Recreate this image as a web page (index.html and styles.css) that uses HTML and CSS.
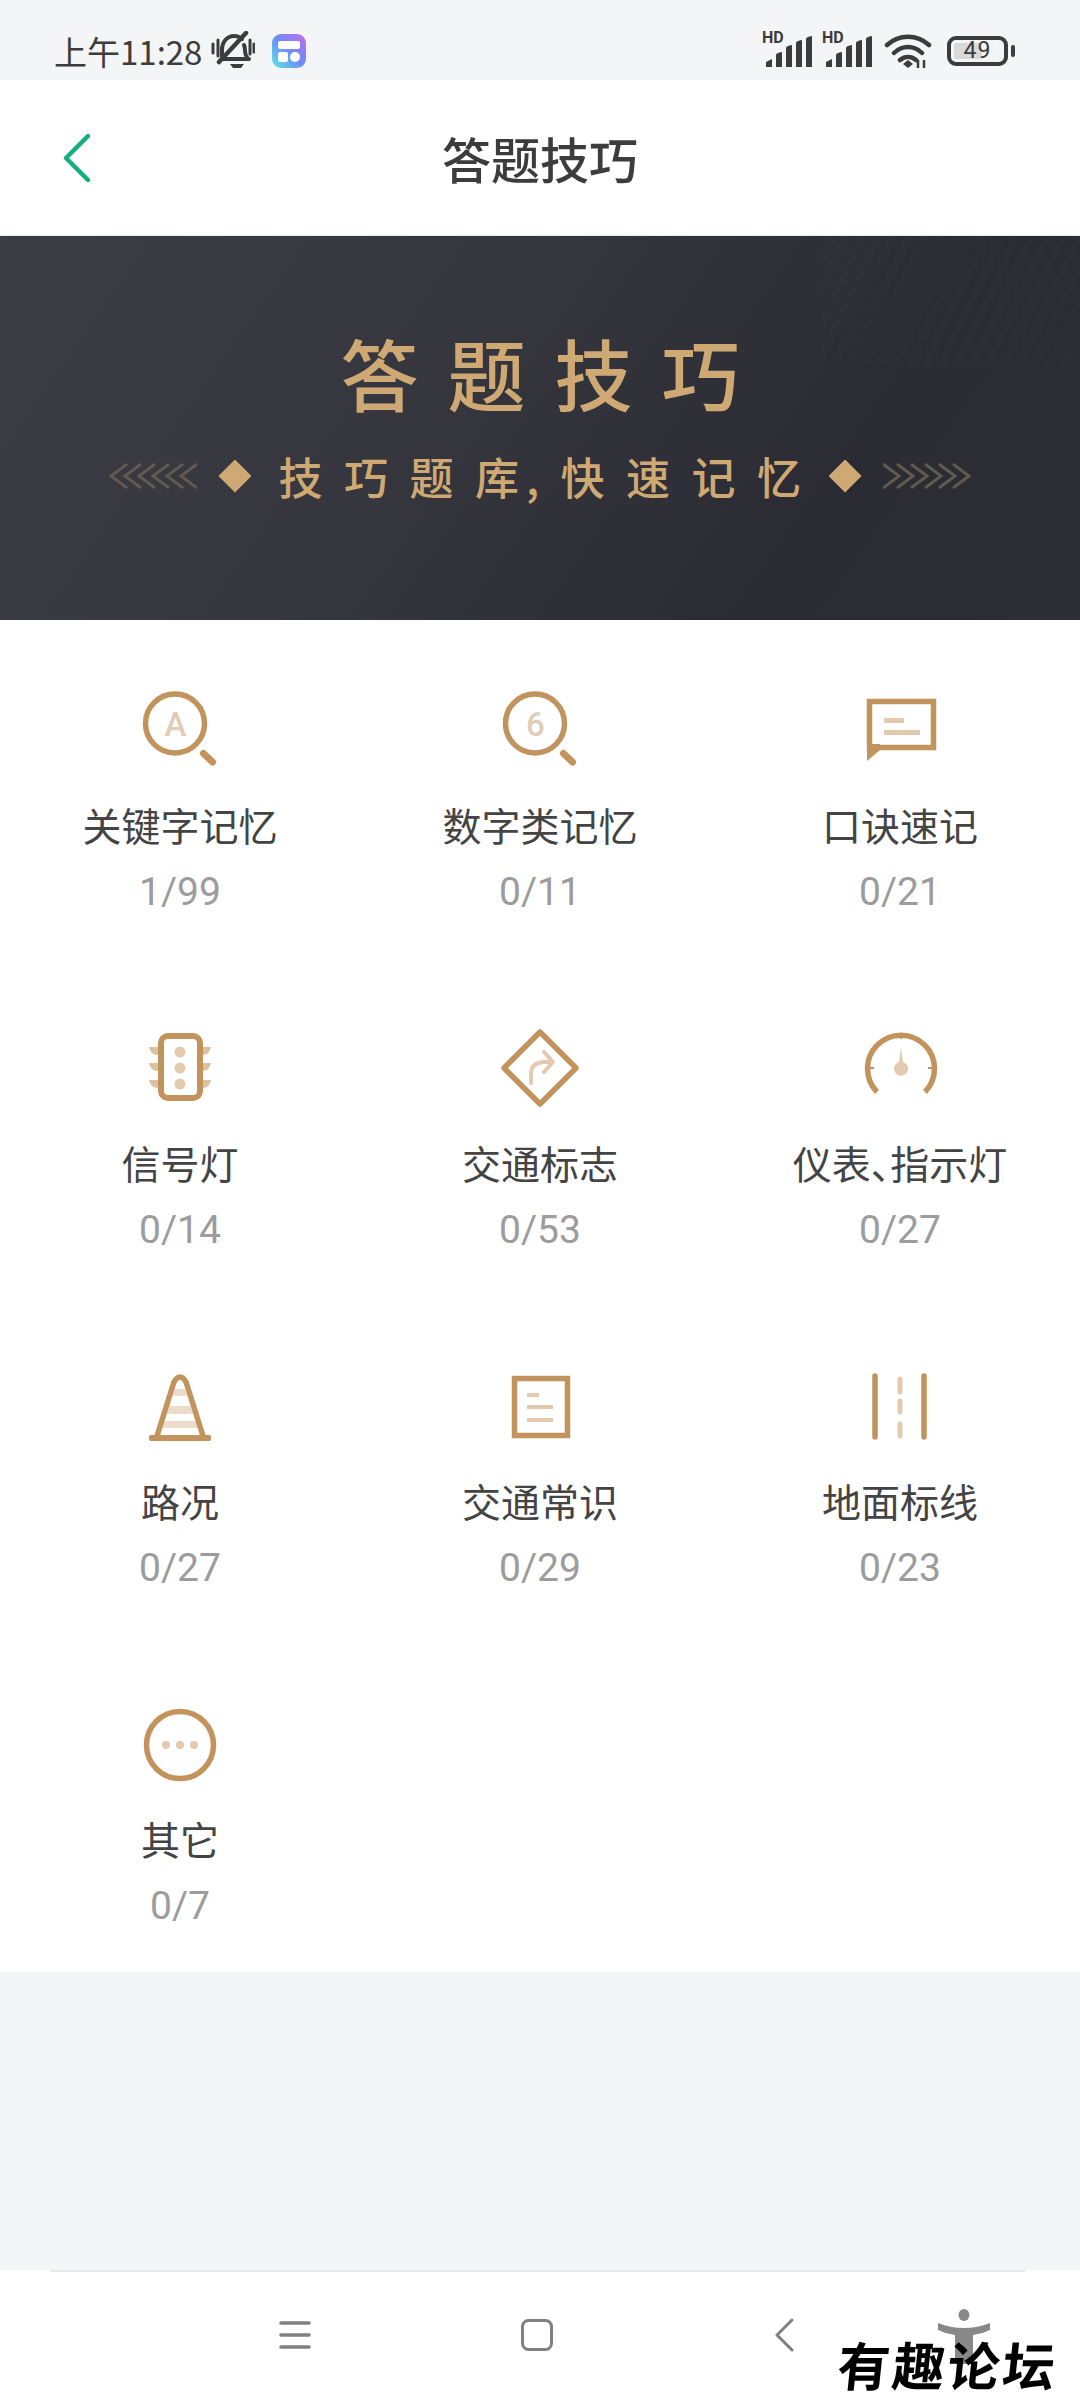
FILE: index.html
```html
<!DOCTYPE html>
<html lang="zh-CN">
<head>
    <meta charset="UTF-8">
    <title>答题技巧</title>
    <link rel="stylesheet" href="styles.css">
</head>
<body>

    <!-- status bar -->
    <div class="status-bar">
        <div class="status-left">
            <span class="time">上午11:28</span>
            <svg class="bell" width="44" height="40" viewBox="0 0 44 40">
                <path d="M11 27V19C11 11 16 5 23 5c3 0 6 1 8 3M33 14c1 2 1 4 1 6 0 4 2 6 3 8M11 28H38" fill="none" stroke="#3c3c3c" stroke-width="4" stroke-linecap="round" stroke-linejoin="round"/>
                <path d="M35 2L8 31" stroke="#3c3c3c" stroke-width="4.500" stroke-linecap="round"/>
                <path d="M19 33h14l-3 4h-8z" fill="#3c3c3c"/>
                <path d="M2 13v9M7 9v16M39 9v14M43 13v8" stroke="#3c3c3c" stroke-width="3" stroke-linecap="round"/>
            </svg>
            <svg class="app-icon" width="34" height="34" viewBox="0 0 34 34">
                <defs>
                    <linearGradient id="appGrad" x1="0" y1="1" x2="1" y2="0">
                        <stop offset="0" stop-color="#5fe6e0"/>
                        <stop offset="0.500" stop-color="#6d8cf7"/>
                        <stop offset="1" stop-color="#c26cf5"/>
                    </linearGradient>
                </defs>
                <rect width="34" height="34" rx="9" fill="url(#appGrad)"/>
                <rect x="6" y="7" width="22" height="8" rx="2" fill="#fff"/>
                <rect x="6" y="18" width="10" height="10" rx="2" fill="#fff"/>
                <circle cx="23" cy="23" r="5" fill="#fff"/>
            </svg>
        </div>
        <div class="status-right">
            <div class="signal">
                <span class="hd">HD</span>
                <svg width="50" height="32" viewBox="0 0 50 32">
                    <path d="M2 31v-5l6-3v8zM12 31V19q0-2 6-3v15zM22 31V12q0-2 6-3v22zM32 31V7q0-2 6-3v27zM42 31V3q0-2 6-3v31z" fill="#3c3c3c"/>
                </svg>
            </div>
            <div class="signal">
                <span class="hd">HD</span>
                <svg width="50" height="32" viewBox="0 0 50 32">
                    <path d="M2 31v-5l6-3v8zM12 31V19q0-2 6-3v15zM22 31V12q0-2 6-3v22zM32 31V7q0-2 6-3v27zM42 31V3q0-2 6-3v31z" fill="#3c3c3c"/>
                </svg>
            </div>
            <svg class="wifi" width="48" height="36" viewBox="0 0 48 36">
                <path d="M3 12C15 1 33 1 45 12M10 20C18 12 30 12 38 20M16 27c5-4 11-4 16 0" fill="none" stroke="#3c3c3c" stroke-width="4.500" stroke-linecap="round"/>
                <path d="M19 31l5-4 5 4-5 4z" fill="#3c3c3c"/>
                <path d="M34 27v8M40 27v8" stroke="#3c3c3c" stroke-width="2.500"/>
            </svg>
            <div class="battery">
                <div class="battery-fill"></div>
                <span class="battery-num">49</span>
                <div class="battery-tip"></div>
            </div>
        </div>
    </div>

    <!-- header -->
    <header class="top-bar">
        <svg class="back" width="28" height="48" viewBox="0 0 28 48">
            <path d="M25 2L3 24l22 22" fill="none" stroke="#12b07a" stroke-width="4.500" stroke-linecap="round" stroke-linejoin="round"/>
        </svg>
        <h1 class="page-title">答题技巧</h1>
    </header>

    <!-- banner -->
    <section class="banner">
        <div class="banner-title">答题技巧</div>
        <div class="banner-sub">
            <svg width="88" height="26" viewBox="0 0 88 26" class="chevrons">
                <path d="M18 1L2 13l16 12M32 1L16 13l16 12M46 1L30 13l16 12M60 1L44 13l16 12M74 1L58 13l16 12M88 1L72 13l16 12" fill="none" stroke="#62594f" stroke-width="3"/>
            </svg>
            <span class="diamond"></span>
            <span class="banner-sub-text">技巧题<span class="tight">库</span>,快速记忆</span>
            <span class="diamond"></span>
            <svg width="88" height="26" viewBox="0 0 88 26" class="chevrons">
                <path d="M0 1l16 12L0 25M14 1l16 12-16 12M28 1l16 12-16 12M42 1l16 12-16 12M56 1l16 12-16 12M70 1l16 12-16 12" fill="none" stroke="#62594f" stroke-width="3"/>
            </svg>
        </div>
    </section>

    <!-- categories -->
    <main class="grid">
        <div class="cell">
            <svg class="icon" viewBox="0 0 90 90">
                <circle class="line" cx="40" cy="41.500" r="29.500"/>
                <text class="icon-letter" x="40.500" y="54">A</text>
                <path class="line thick" d="M68.500 71.500l9 8.500"/>
            </svg>
            <div class="label">关键字记忆</div>
            <div class="count">1/99</div>
        </div>
        <div class="cell">
            <svg class="icon" viewBox="0 0 90 90">
                <circle class="line" cx="40" cy="41.500" r="29.500"/>
                <text class="icon-letter" x="40.500" y="54">6</text>
                <path class="line thick" d="M68.500 71.500l9 8.500"/>
            </svg>
            <div class="label">数字类记忆</div>
            <div class="count">0/11</div>
        </div>
        <div class="cell">
            <svg class="icon" viewBox="0 0 90 90">
                <path class="line square" d="M14.500 19.500H78.500V65.500H14.500z"/>
                <path class="fill" d="M12 62h13v6L12 79z"/>
                <path class="soft" d="M29 36h20v5H29zM29 48h36v5H29z"/>
            </svg>
            <div class="label">口诀速记</div>
            <div class="count">0/21</div>
        </div>

        <div class="cell">
            <svg class="icon" viewBox="0 0 90 90">
                <path class="wing" d="M14 27h9v8c-5 0-8-3-9-8zM14 43h9v8c-5 0-8-3-9-8zM14 60h9v8c-5 0-8-3-9-8zM76 27h-9v8c5 0 8-3 9-8zM76 43h-9v8c5 0 8-3 9-8zM76 60h-9v8c5 0 8-3 9-8z"/>
                <rect class="line bold" x="26" y="16" width="39" height="62" rx="7"/>
                <circle class="soft" cx="45" cy="32" r="5.500"/>
                <circle class="soft" cx="45" cy="48" r="5.500"/>
                <circle class="soft" cx="45" cy="64" r="5.500"/>
            </svg>
            <div class="label">信号灯</div>
            <div class="count">0/14</div>
        </div>
        <div class="cell">
            <svg class="icon" viewBox="0 0 90 90">
                <path class="line round-join" d="M45 12L81 48 45 84 9 48z"/>
                <path class="soft-line" d="M36 63V54Q36 42 50 42H57M49 32l9 10-9 10"/>
            </svg>
            <div class="label">交通标志</div>
            <div class="count">0/53</div>
        </div>
        <div class="cell">
            <svg class="icon" viewBox="0 0 90 90">
                <path class="line" d="M22 72A33.500 33.500 0 1 1 70 72"/>
                <path class="fill" d="M45 14h2v5h-2zM14 47h5v2h-5zM73 47h5v2h-5z"/>
                <path class="soft" d="M46 27l2 15a7 7 0 1 1-4 0z"/>
            </svg>
            <div class="label">仪表、指示灯</div>
            <div class="count">0/27</div>
        </div>

        <div class="cell">
            <svg class="icon" viewBox="0 0 90 90">
                <path class="pale" d="M40 31h10l2 7H38zM34 48h22l2 8H32zM29 63h32l2 7H27z"/>
                <path class="line round-join" d="M22 78L39 24Q45 14 51 24L68 78"/>
                <rect class="fill" x="14" y="77" width="62" height="6" rx="2"/>
            </svg>
            <div class="label">路况</div>
            <div class="count">0/27</div>
        </div>
        <div class="cell">
            <svg class="icon" viewBox="0 0 90 90">
                <rect class="line" x="19.500" y="20.500" width="53" height="57"/>
                <path class="soft" d="M32 35h12v4H32zM32 47h26v4H32zM32 60h26v4H32z"/>
            </svg>
            <div class="label">交通常识</div>
            <div class="count">0/29</div>
        </div>
        <div class="cell">
            <svg class="icon" viewBox="0 0 90 90">
                <path class="line" stroke-linecap="round" d="M20 18V79M69 18V79"/>
                <path class="soft-line wide" d="M45 21V34M45 43V54M45 66V78"/>
            </svg>
            <div class="label">地面标线</div>
            <div class="count">0/23</div>
        </div>

        <div class="cell">
            <svg class="icon" viewBox="0 0 90 90">
                <circle class="line" cx="45" cy="49" r="33.500"/>
                <circle class="soft" cx="31" cy="49" r="4"/>
                <circle class="soft" cx="45" cy="49" r="4"/>
                <circle class="soft" cx="59" cy="49" r="4"/>
            </svg>
            <div class="label">其它</div>
            <div class="count">0/7</div>
        </div>
    </main>

    <div class="spacer"></div>

    <!-- bottom navigation -->
    <nav class="nav-bar">
        <svg width="32" height="30" viewBox="0 0 32 30">
            <path d="M2 3h28M2 15h28M2 27h28" stroke="#808080" stroke-width="3.500" stroke-linecap="round"/>
        </svg>
        <svg class="nav-home" width="32" height="32" viewBox="0 0 32 32">
            <rect x="1.500" y="1.500" width="29" height="29" rx="6" fill="none" stroke="#808080" stroke-width="3"/>
        </svg>
        <svg class="nav-back" width="20" height="34" viewBox="0 0 20 34">
            <path d="M18 2L3 17l15 15" fill="none" stroke="#808080" stroke-width="3" stroke-linecap="round" stroke-linejoin="round"/>
        </svg>
    </nav>

    <!-- forum watermark, sits over the nav bar -->
    <svg class="mark-figure" width="54" height="56" viewBox="0 0 54 56">
        <ellipse cx="27" cy="7" rx="5.500" ry="6" fill="#888"/>
        <path d="M1 15q12 5 26 5t26-5v7q-8 4-17 5v29H18V27q-9-1-17-5z" fill="#888"/>
    </svg>
    <div class="mark-text">有趣论坛</div>

</body>
</html>
```

FILE: styles.css
```css
* {
    box-sizing: border-box;
}

body {
    margin: 0;
    width: 1080px;
    height: 2400px;
    display: flex;
    flex-direction: column;
    position: relative;
    overflow: hidden;
    background-color: #f4f5f7;
    font-family: "Noto Sans CJK SC", "Noto Sans", sans-serif;
}

/* status bar */
.status-bar {
    height: 80px;
    display: flex;
    justify-content: space-between;
    align-items: center;
    padding: 22px 72px 0 54px;
}

.status-left,
.status-right {
    display: flex;
    align-items: center;
}

.time {
    font-size: 33px;
    color: #3c3c3c;
    line-height: 40px;
}

.bell {
    margin-left: 9px;
}

.app-icon {
    margin-left: 17px;
}

.signal {
    position: relative;
    width: 50px;
    height: 34px;
    margin-right: 10px;
    display: flex;
    align-items: flex-end;
}

.hd {
    position: absolute;
    left: -2px;
    top: -4px;
    font-family: Roboto, sans-serif;
    font-size: 16px;
    font-weight: 700;
    line-height: 16px;
    color: #3c3c3c;
}

.wifi {
    margin: 0 15px 0 0;
}

.battery {
    position: relative;
    width: 61px;
    height: 30px;
    border: 4px solid #3c3c3c;
    border-radius: 9px;
    display: flex;
    align-items: center;
    justify-content: center;
}

.battery-fill {
    position: absolute;
    left: 3px;
    top: 3px;
    bottom: 3px;
    width: 28px;
    background-color: #d9d9d9;
    border-radius: 2px;
}

.battery-num {
    position: relative;
    font-family: Roboto, sans-serif;
    font-size: 23px;
    line-height: 22px;
    letter-spacing: 1px;
    color: #3c3c3c;
}

.battery-tip {
    position: absolute;
    right: -11px;
    top: 5px;
    width: 4px;
    height: 12px;
    border-radius: 2px;
    background-color: #3c3c3c;
}

/* header */
.top-bar {
    height: 156px;
    background-color: #fff;
    border-bottom: 1px solid #ececec;
    display: flex;
    align-items: center;
    justify-content: center;
    position: relative;
}

.back {
    position: absolute;
    left: 63px;
    top: 54px;
}

.page-title {
    margin: 0;
    font-size: 49px;
    font-weight: 500;
    color: #3c3c3c;
}

/* banner */
.banner {
    height: 384px;
    background:
        repeating-linear-gradient(115deg, transparent 0 7px, rgba(255, 255, 255, 0.007) 7px 14px) right top / 260px 130px no-repeat,
        linear-gradient(125deg, #3c3c44 0%, #36363e 40%, #2b2b34 75%, #2d2d35 100%);
    display: flex;
    flex-direction: column;
    align-items: center;
}

.banner-title {
    margin-top: 86px;
    font-size: 78px;
    line-height: 100px;
    letter-spacing: 29px;
    margin-right: -29px;
    font-weight: 500;
    color: #cfa973;
}

.banner-sub {
    margin-top: 24px;
    display: flex;
    align-items: center;
}

.banner-sub-text {
    margin: 0 -15px 0 6px;
    font-size: 44px;
    line-height: 60px;
    letter-spacing: 21.500px;
    font-weight: 500;
    color: #cfa973;
}

.tight {
    letter-spacing: 7px;
}

.diamond {
    width: 33px;
    height: 33px;
    margin: 0 21px;
    background-color: #cfa973;
    clip-path: polygon(50% 0, 100% 50%, 50% 100%, 0 50%);
}

/* categories */
.grid {
    display: grid;
    grid-template-columns: repeat(3, 360px);
    grid-auto-rows: 338px;
    background-color: #fff;
}

.cell {
    display: flex;
    flex-direction: column;
    align-items: center;
    padding-top: 62px;
}

.icon {
    width: 90px;
    height: 90px;
}

.line {
    fill: none;
    stroke: #c2935c;
    stroke-width: 5.5;
}

.line.bold {
    stroke-width: 6;
}

.line.thick {
    stroke-width: 7;
    stroke-linecap: round;
}

.line.square {
    stroke-linejoin: miter;
}

.round-join {
    stroke-linejoin: round;
}

.fill {
    fill: #c2935c;
}

.wing {
    fill: #dcc0a0;
}

.soft {
    fill: #e3c9ae;
}

.pale {
    fill: #ecdccb;
}

.soft-line {
    fill: none;
    stroke: #e3c9ae;
    stroke-width: 4;
    stroke-linecap: round;
    stroke-linejoin: round;
}

.soft-line.wide {
    stroke-width: 5;
}

.icon-letter {
    font-family: Roboto, sans-serif;
    font-size: 33px;
    font-weight: 500;
    text-anchor: middle;
    fill: #e0cdb8;
}

.label {
    margin-top: 27px;
    font-size: 39px;
    line-height: 50px;
    color: #444;
    white-space: nowrap;
    font-feature-settings: "halt";
}

.count {
    margin-top: 21px;
    font-family: Roboto, sans-serif;
    font-size: 39px;
    line-height: 44px;
    color: #9c9c9c;
}

.spacer {
    flex: 1;
}

/* bottom navigation */
.nav-bar {
    height: 130px;
    background-color: #fff;
    position: relative;
    display: flex;
    align-items: center;
    padding-left: 279px;
}

.nav-bar::before {
    content: "";
    position: absolute;
    left: 50px;
    right: 55px;
    top: 0;
    height: 2px;
    background-color: #e6e8ea;
}

.nav-home {
    margin-left: 210px;
}

.nav-back {
    margin-left: 221px;
}

/* watermark */
.mark-figure {
    position: absolute;
    left: 937px;
    top: 2308px;
}

.mark-text {
    position: absolute;
    left: 838px;
    top: 2334px;
    font-size: 52px;
    line-height: 60px;
    letter-spacing: 3px;
    font-weight: 700;
    color: #000;
    transform: skewX(-6deg);
}
```
